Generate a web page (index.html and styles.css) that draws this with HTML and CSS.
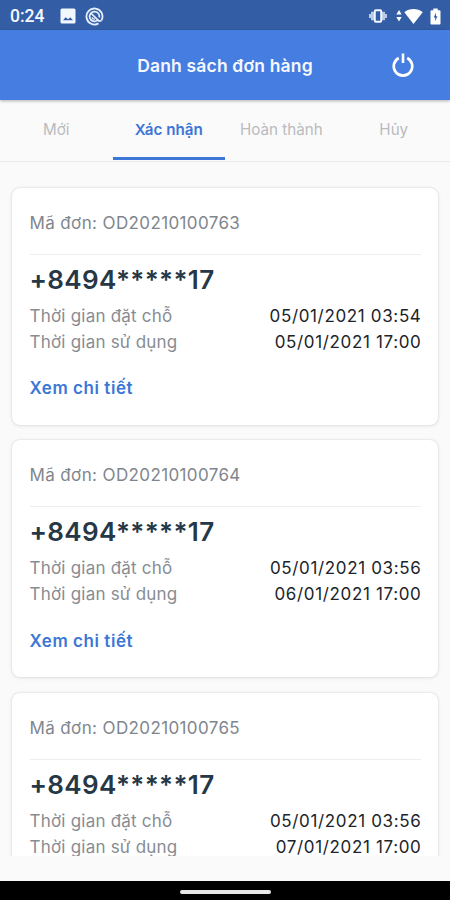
FILE: index.html
```
<!DOCTYPE html>
<html lang="vi">
<head>
    <meta charset="UTF-8">
    <meta name="viewport" content="width=device-width, initial-scale=1.0">
    <title>Danh sách đơn hàng</title>
    <link rel="stylesheet" href="styles.css">
</head>
<body>
    <div class="status-bar">
        <span class="clock">0:24</span>
        <svg class="icon-image" width="16" height="16" viewBox="0 0 16 16">
            <path fill="#f3f8ff" fill-rule="evenodd" d="M2 .5h12A1.500 1.500 0 0 1 15.500 2v12a1.500 1.500 0 0 1-1.500 1.500H2A1.500 1.500 0 0 1 .5 14V2A1.500 1.500 0 0 1 2 .5zM3 12.300h10L10.200 9.300 8.300 11.200 5.600 9.300z"/>
        </svg>
        <svg class="icon-app" width="19" height="19" viewBox="0 0 19 19" fill="none" stroke="#e6effc">
            <path stroke-width="1.800" d="M13.500 16.400A8 8 0 1 1 16.500 13.300"/>
            <path stroke-width="1.700" d="M12.400 13.400A4.900 4.900 0 1 1 14.300 10.500M5.800 6l8 7.800h2.700"/>
            <path stroke-width="1.300" d="M7 10.300a2.600 2.600 0 0 0 3 1.700"/>
        </svg>
        <div class="status-right">
            <svg width="18" height="14" viewBox="0 0 18 14">
                <path fill="#b9cbe9" d="M2 2.800h3v8.400H2zM13 2.800h3v8.400h-3zM0 5h2v4H0zM16 5h2v4h-2z"/>
                <rect x="5.800" y="1.300" width="6.400" height="11.400" rx="1" fill="#335ea6" stroke="#f3f8ff" stroke-width="1.900"/>
            </svg>
            <svg class="icon-wifi" width="27" height="17" viewBox="0 0 27 17" fill="#fff">
                <path d="M.3 6.500L3 2l2.700 4.500zM.3 9h5.400L3 13.500z"/>
                <path d="M8.300 4.300C13.500-.1 21.500-.1 26.700 4.300L17.500 16z"/>
            </svg>
            <svg class="icon-battery" width="11" height="17" viewBox="0 0 11 17">
                <path fill="#fff" d="M3.300.5h4.400v1.700H9.500a1 1 0 0 1 1 1v12.300a1 1 0 0 1-1 1h-8a1 1 0 0 1-1-1V3.200a1 1 0 0 1 1-1h1.800z"/>
                <path fill="#335ea6" d="M6 4.800L3.700 9.500h1.500v3.800l2.200-5H6z"/>
            </svg>
        </div>
    </div>

    <header class="header">
        <h1>Danh sách đơn hàng</h1>
        <button class="power-btn" aria-label="Đăng xuất">
            <svg width="24" height="26" viewBox="0 0 24 26" fill="none" stroke="#fff" stroke-width="2.600">
                <path d="M7.800 6A9.300 9.300 0 1 0 16.200 6M12 1.500v9.500"/>
            </svg>
        </button>
    </header>

    <nav class="tabs">
        <a class="tab">Mới</a>
        <a class="tab active">Xác nhận</a>
        <a class="tab">Hoàn thành</a>
        <a class="tab">Hủy</a>
    </nav>

    <main class="order-list">
        <div class="order">
            <div class="order-code">Mã đơn: OD20210100763</div>
            <div class="phone">+8494*****17</div>
            <div class="row"><span>Thời gian đặt chỗ</span><time>05/01/2021 03:54</time></div>
            <div class="row"><span>Thời gian sử dụng</span><time>05/01/2021 17:00</time></div>
            <a class="detail">Xem chi tiết</a>
        </div>
        <div class="order">
            <div class="order-code">Mã đơn: OD20210100764</div>
            <div class="phone">+8494*****17</div>
            <div class="row"><span>Thời gian đặt chỗ</span><time>05/01/2021 03:56</time></div>
            <div class="row"><span>Thời gian sử dụng</span><time>06/01/2021 17:00</time></div>
            <a class="detail">Xem chi tiết</a>
        </div>
        <div class="order">
            <div class="order-code">Mã đơn: OD20210100765</div>
            <div class="phone">+8494*****17</div>
            <div class="row"><span>Thời gian đặt chỗ</span><time>05/01/2021 03:56</time></div>
            <div class="row"><span>Thời gian sử dụng</span><time>07/01/2021 17:00</time></div>
        </div>
    </main>

    <div class="nav-bar"><div class="home-handle"></div></div>
</body>
</html>
```

FILE: styles.css
```
* {
    box-sizing: border-box;
}

body {
    display: flex;
    flex-direction: column;
    width: 450px;
    height: 900px;
    margin: 0;
    overflow: hidden;
    background-color: #fafafa;
    font-family: Inter, "Noto Sans", sans-serif;
}

svg {
    display: block;
    flex: none;
}

/* Android status bar */
.status-bar {
    display: flex;
    align-items: center;
    flex: none;
    height: 30px;
    padding: 2px 9px 0 10px;
    background-color: #335ea6;
}

.clock {
    width: 50px;
    color: #f3f8ff;
    font-family: Roboto, sans-serif;
    font-size: 17.5px;
    font-weight: 500;
}

.icon-app {
    margin-left: 9px;
}

.status-right {
    display: flex;
    align-items: center;
    margin-left: auto;
}

.icon-wifi {
    margin-left: 9px;
}

.icon-battery {
    margin-left: 7px;
}

/* Header */
.header {
    display: grid;
    grid-template-columns: 60px 1fr 60px;
    align-items: center;
    flex: none;
    height: 70px;
    padding: 0 17px;
    background-color: #467de0;
    box-shadow: 0 1px 3px rgba(0, 0, 0, 0.3);
    z-index: 1;
}

.header h1 {
    grid-column: 2;
    margin: 0;
    color: #f5f9ff;
    font-size: 17.5px;
    font-weight: 600;
    letter-spacing: 0.17px;
    text-align: center;
    white-space: nowrap;
}

.power-btn {
    justify-self: center;
    padding: 0;
    border: none;
    background: none;
}

/* Tabs */
.tabs {
    display: grid;
    grid-template-columns: repeat(4, 1fr);
    flex: none;
    height: 62px;
    border-bottom: 1px solid #e9eaeb;
}

.tab {
    height: 60px;
    color: #b9bbbe;
    font-size: 15.2px;
    line-height: 60px;
    text-align: center;
    white-space: nowrap;
}

.tab.active {
    border-bottom: 3px solid #3c76d6;
    color: #3c76d6;
    font-weight: 600;
}

/* Orders */
.order-list {
    display: flex;
    flex-direction: column;
    gap: 15.5px;
    flex: none;
    height: 694px;
    padding: 25.5px 12px 0;
    overflow: hidden;
}

.order {
    flex: none;
    height: 237px;
    padding: 0 17.5px;
    border-radius: 8px;
    background-color: #fff;
    box-shadow: 0 0 2px rgba(40, 50, 60, 0.2), 0 1px 4px rgba(40, 50, 60, 0.08);
}

.order-code {
    height: 67px;
    border-bottom: 1px solid #eceeef;
    color: #80868d;
    font-size: 17px;
    letter-spacing: 0.38px;
    line-height: 71px;
}

.phone {
    height: 48px;
    color: #263746;
    font-size: 26px;
    font-weight: 600;
    letter-spacing: 0.36px;
    line-height: 50px;
}

.row {
    display: flex;
    justify-content: space-between;
    color: #878c92;
    font-size: 17px;
    letter-spacing: 0.22px;
    line-height: 26.3px;
}

.row time {
    margin-right: -1px;
    color: #20242a;
    letter-spacing: 0.65px;
}

.detail {
    display: block;
    margin-top: 20px;
    color: #3c76d6;
    font-size: 17px;
    font-weight: 600;
    letter-spacing: 0.55px;
    line-height: 26px;
}

/* Gesture navigation */
.nav-bar {
    display: flex;
    justify-content: center;
    flex: none;
    height: 19px;
    margin-top: auto;
    padding-top: 9px;
    background-color: #000;
}

.home-handle {
    width: 91px;
    height: 4px;
    border-radius: 2px;
    background-color: #e8e8e8;
}
```
